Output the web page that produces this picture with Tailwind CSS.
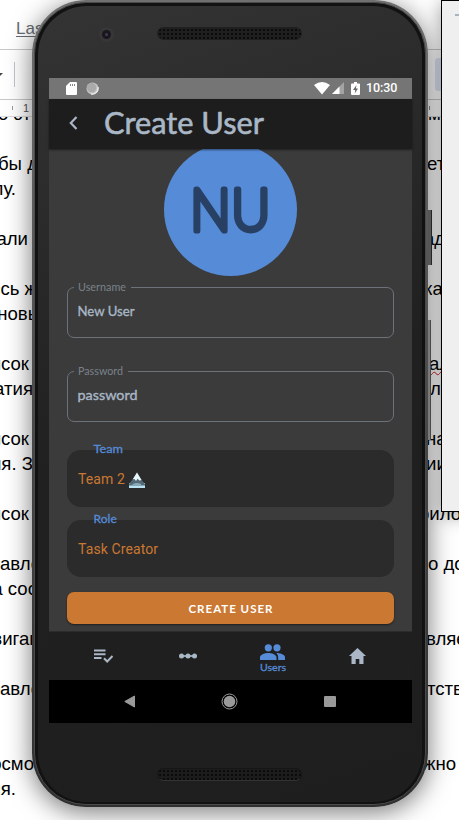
<!DOCTYPE html>
<html lang="en">
<head>
<meta charset="utf-8">
<title>Create User</title>
<script src="https://cdn.jsdelivr.net/npm/@tailwindcss/browser@4"></script>
</head>
<body class="overflow-hidden bg-white">
<div class="relative w-[459px] h-[820px] overflow-hidden bg-white font-['Liberation_Sans',sans-serif] text-black">

  <!-- document editor -->
  <div class="flex flex-col h-full">
    <div class="h-[50px] border-b border-[#c8c8c8] pl-[16px] pt-[19px] text-[17px] leading-[20px] text-[#666b72] underline underline-offset-2">Las</div>
    <div class="h-[50px] border-b border-[#c8c8c8] flex items-center justify-between">
      <div class="flex items-center gap-[11px]"><span class="border-x-[3px] border-x-transparent border-t-[3px] border-t-[#444] -ml-[3px]"></span><span class="w-px h-[25px] bg-[#c3c5cc]"></span></div>
      <div class="w-[24px] h-[33px] rounded-[3px] bg-[#dfe5f8]"></div>
    </div>
    <div class="h-[17px] border-b border-[#ddd] flex items-center text-[11px] leading-[12px] text-[#555]"><span class="w-px h-[4px] bg-[#999] ml-[12px]"></span><span class="ml-[10px]">1</span><span class="w-px h-[4px] bg-[#888] ml-[400px]"></span></div>
    <div class="h-[34px] overflow-hidden flex justify-between text-[18.6px] leading-[25px]">
      <span class="-mt-[16px] -ml-[2px] h-[21px] [clip-path:inset(16px_0_0_0)]">о эт</span><span class="-mt-[16px] w-[31px] [clip-path:inset(16px_0_0_0)]">ми</span>
    </div>
    <div class="flex justify-between text-[18.6px] leading-[25px] whitespace-nowrap">
      <div class="w-[45px] flex flex-col items-end">
        <div class="h-[25px] pr-[7px]">бы д</div>
        <div class="h-[50px] pr-[29px]">лу.</div>
        <div class="h-[50px] pr-[17px]">али</div>
        <div class="h-[25px] pr-[8px]">сь ж</div>
        <div class="h-[50px] pr-[4px]">новы</div>
        <div class="h-[25px] pr-[16px]">исок</div>
        <div class="h-[50px] pr-[12px]">атия</div>
        <div class="h-[25px] pr-[16px]">исок</div>
        <div class="h-[50px] pr-[12px]">ия. З</div>
        <div class="h-[50px] pr-[16px]">исок</div>
        <div class="h-[25px] pr-[4px]">бавле</div>
        <div class="h-[50px] pr-[7px]">а соо</div>
        <div class="h-[50px] pr-[5px]">вигац</div>
        <div class="h-[75px] pr-[4px]">бавле</div>
        <div class="h-[25px] pr-[11px]">осмо</div>
        <div class="h-[25px] pr-[29px]">ия.</div>
      </div>
      <div class="w-[39px] flex flex-col">
        <div class="h-[75px] pl-[7px]">ет</div>
        <div class="h-[50px] pl-[4px]">ад</div>
        <div class="h-[75px] pl-[4px]">ка</div>
        <div class="h-[25px] pl-[9px] underline decoration-wavy decoration-[#d02020] decoration-1">ал</div>
        <div class="h-[50px] pl-[10px]">л</div>
        <div class="h-[25px] pl-[6px]">на</div>
        <div class="h-[50px] pl-[6px]">ии</div>
        <div class="h-[50px] -ml-[1px]">рило</div>
        <div class="h-[75px] pl-[8px]">о до</div>
        <div class="h-[50px] pl-[6px]">вляе</div>
        <div class="h-[75px] pl-[7px]">тств</div>
        <div class="h-[25px] pl-[3px]">жно в</div>
      </div>
    </div>
  </div>

  <!-- side window over the document -->
  <div class="absolute z-10 left-[441px] top-0 w-[30px] h-[512px] border border-black bg-[#efefef] shadow-[0_3px_18px_1px_rgba(0,0,0,0.35)] pl-[13px] pt-[13px]"><div class="h-[2px] w-3 bg-[#a9b4bd]"></div></div>

  <!-- phone side keys -->
  <div class="absolute left-[426px] top-[210px] w-[6px] h-[55px] bg-[#777] border-r border-[#333]"></div>
  <div class="absolute left-[426px] top-[320px] w-[5px] h-[120px] bg-[#aaa] border-r border-[#666]"></div>

  <!-- phone -->
  <div class="absolute left-[32px] top-0 w-[396px] h-[807px] rounded-[54px] bg-linear-to-b from-[#707070] via-[#444] via-60% to-[#303030] shadow-[0_5px_24px_1px_rgba(0,0,0,0.5)] p-[2px]">
    <div class="h-full rounded-[52px] bg-[#121212] pt-[3px] pb-[2px] px-[3px] border border-[#4b4b4b]">
      <div class="relative h-full rounded-[49px] bg-linear-160 from-[#343435] via-[#202020] via-50% to-[#1e1e1f] pl-[11px] pr-[10px] flex flex-col">
        <div class="h-[72px] pt-[21px] flex items-start">
          <div class="size-[15px] rounded-full bg-[#373738] ml-[50px] flex items-center justify-center"><div class="size-[9px] rounded-full bg-[#19171e] flex items-center justify-center"><div class="size-[3px] rounded-full bg-[#453a4c]"></div></div></div>
          <div class="w-[145px] h-[13px] rounded-full ml-[43px] bg-[#151515] bg-[radial-gradient(circle,#0b0b0b_0.8px,#1f1f1f_1.3px)] bg-size-[4px_4px] border border-[#202020]"></div>
        </div>

        <div class="w-[363px] h-[645px] shrink-0 flex flex-col bg-[#3b3b3b]">
          <!-- status bar -->
          <div class="h-[20.5px] shrink-0 bg-[#757575] flex items-center">
            <svg class="w-[11px] h-[13px] ml-[17px]" viewBox="0 0 11 13"><path d="M4 0h6q1 0 1 1v11q0 1-1 1H1q-1 0-1-1V4z" fill="#fff"/><path d="M4.5 2v2M6.5 2v2M8.5 2v2" stroke="#888"/></svg>
            <svg class="size-[13px] ml-[9px]" viewBox="0 0 13 13"><circle cx="6.5" cy="6.5" r="6" fill="#c4c4c4"/><circle cx="5.7" cy="5.7" r="4.7" fill="#aaa"/><path d="M12 5a6 6 0 0 1-7 7" stroke="#eee" stroke-width="1.3" fill="none"/></svg>
            <svg class="w-[16px] h-[13px] ml-[215px]" viewBox="0 0 16 13"><path d="M0 3Q8-3 16 3L8 12.6z" fill="#fff"/></svg>
            <svg class="size-[12px] ml-[2px]" viewBox="0 0 12 12"><path d="M12 0v12H0z" fill="#a3a3a3"/><path d="M7.5 4.5V12H0z" fill="#fff"/></svg>
            <svg class="w-[9px] h-[13px] ml-[7px]" viewBox="0 0 9 13"><path d="M3 0h3v1.500h2q1 0 1 1V12q0 1-1 1H1q-1 0-1-1V2.500q0-1 1-1h2z" fill="#fff"/><path d="M5.500 3L2 8h2.300L3.700 11.500 7 6.500H4.900z" fill="#666"/></svg>
            <span class="ml-[6px] pt-px font-['Roboto',sans-serif] font-medium text-[12.500px] text-white tracking-[-0.1px]">10:30</span>
          </div>
          <!-- header -->
          <div class="h-[50.5px] shrink-0 bg-[#1d1d1d] flex items-center shadow-[0_1px_2px_rgba(0,0,0,.5)] relative z-10">
            <svg class="w-[9px] h-[14px] ml-[20px] -mt-[2px]" viewBox="0 0 9 14"><path d="M7.500 1L1.800 7 7.500 13" fill="none" stroke="#a9b7c6" stroke-width="2.200"/></svg>
            <svg class="w-[180px] h-[50px] ml-[23px]" viewBox="0 0 180 50"><text x="3" y="35" font-family="Lato,sans-serif" font-size="30.500" textLength="160" lengthAdjust="spacingAndGlyphs" fill="#a9b7c6" stroke="#a9b7c6" stroke-width=".6" stroke-linejoin="round">Create User</text></svg>
          </div>
          <!-- form -->
          <div class="h-[482px] shrink-0 overflow-hidden px-[18px]">
            <div class="w-[132.500px] h-[133px] -mt-[6.500px] ml-[97px] rounded-full bg-[#568bd8]">
              <svg class="size-[133px]" viewBox="0 0 133 133"><text x="26" y="87.500" font-family="Lato,sans-serif" font-size="60" font-weight="300" textLength="80.500" lengthAdjust="spacingAndGlyphs" fill="#274064" stroke="#274064" stroke-width="5" stroke-linejoin="round">NU</text></svg>
            </div>
            <div class="relative mt-[11px] w-[327px] h-[51px] rounded-[7px] border border-[#6c7279]">
              <svg class="absolute left-[6px] -top-[8px] w-[57px] h-[15px] bg-[#3b3b3b]" viewBox="0 0 57 15"><text x="4" y="11" font-family="Lato,sans-serif" font-size="10.500" textLength="48" lengthAdjust="spacingAndGlyphs" fill="#7a828b">Username</text></svg>
              <svg class="w-[200px] h-[49px]" viewBox="0 0 200 49"><text x="9.500" y="28" font-family="Lato,sans-serif" font-size="14" textLength="57" lengthAdjust="spacingAndGlyphs" fill="#a9b7c6" stroke="#a9b7c6" stroke-width=".35">New User</text></svg>
            </div>
            <div class="relative mt-[33.500px] w-[327px] h-[51px] rounded-[7px] border border-[#6c7279]">
              <svg class="absolute left-[6px] -top-[8px] w-[54px] h-[15px] bg-[#3b3b3b]" viewBox="0 0 54 15"><text x="4" y="11" font-family="Lato,sans-serif" font-size="10.500" textLength="45" lengthAdjust="spacingAndGlyphs" fill="#7a828b">Password</text></svg>
              <svg class="w-[200px] h-[49px]" viewBox="0 0 200 49"><text x="9.500" y="28" font-family="Lato,sans-serif" font-size="14" textLength="60" lengthAdjust="spacingAndGlyphs" fill="#a9b7c6" stroke="#a9b7c6" stroke-width=".35">password</text></svg>
            </div>
            <div class="relative mt-[27.500px] w-[326.500px] h-[57px] rounded-[14px] bg-[#2b2b2b] flex items-center pl-[11px] pt-[3px] gap-[4px] font-['Roboto',sans-serif] text-[14px] text-[#cb7832]">
              <svg class="absolute left-[26px] -top-[9px] w-[34px] h-[15px]" viewBox="0 0 34 15"><text x=".5" y="11.500" font-family="Lato,sans-serif" font-size="12" textLength="29.500" lengthAdjust="spacingAndGlyphs" fill="#568bd8" stroke="#568bd8" stroke-width=".3">Team</text></svg>
              <span class="w-[47px] tracking-[0.1px]">Team 2</span>
              <svg class="w-[16px] h-[16px]" viewBox="0 0 16 16" role="img" aria-label="🏔️"><path d="M0 11h16v5H0z" fill="#b9e3f2"/><path d="M0 12L3.500 7.500 8 .5l5 8 3 3.500v1.500H0z" fill="#536b78"/><path d="M8 .5L3.800 7.300 5.500 7 7 9l1.500-2.200L10.500 8.500 12.500 8z" fill="#e8f7fb"/><path d="M4 12q4-2 8 0v1.500H3z" fill="#8caab7"/></svg>
            </div>
            <div class="relative mt-[13px] w-[326.500px] h-[57px] rounded-[14px] bg-[#2b2b2b] flex items-center pl-[11px] pt-[3px] font-['Roboto',sans-serif] text-[14px] tracking-[0.1px] text-[#cb7832]">
              <svg class="absolute left-[26px] -top-[9px] w-[34px] h-[15px]" viewBox="0 0 34 15"><text x=".5" y="11.500" font-family="Lato,sans-serif" font-size="12" textLength="23.500" lengthAdjust="spacingAndGlyphs" fill="#568bd8" stroke="#568bd8" stroke-width=".3">Role</text></svg>
              <span>Task Creator</span>
            </div>
            <div class="mt-[15px] w-[326.500px] h-[32px] rounded-[7px] bg-[#cb7832] shadow-[0_1px_2px_rgba(0,0,0,.5)]">
              <svg class="w-[327px] h-[32px]" viewBox="0 0 327 32"><text x="121.500" y="20.500" font-family="Lato,sans-serif" font-weight="700" font-size="11.500" textLength="84" fill="#fff">CREATE USER</text></svg>
            </div>
          </div>
          <!-- tab bar -->
          <div class="h-[49px] shrink-0 bg-[#1f1f1f] border-t border-[#2c2c2c] flex items-center">
            <svg class="w-[20px] h-[14px] ml-[45px]" viewBox="0 0 20 14"><path d="M0 1.500h11.500M0 5.200h11.500M0 9h7.500M10 9.200l3.200 3.300L18.500 7" fill="none" stroke="#a9b7c6" stroke-width="2"/></svg>
            <svg class="w-[18px] h-[6px] ml-[65px]" viewBox="0 0 18 6"><path d="M2 3h14" stroke="#a9b7c6" stroke-width="1.700"/><g fill="#a9b7c6"><circle cx="2.500" cy="3" r="2.500"/><circle cx="9" cy="3" r="2.500"/><circle cx="15.500" cy="3" r="2.500"/></g></svg>
            <div class="ml-[61.500px] w-[28px] flex flex-col items-center pt-[5px]">
              <svg class="w-[25px] h-[17px]" viewBox="0 0 25 17" fill="#568bd8"><circle cx="8.300" cy="3.800" r="3.600"/><circle cx="17" cy="3.800" r="3.600"/><path d="M0 16v-2.700C0 10.500 5.500 9 8.300 9s8.200 1.500 8.200 4.300V16zM16.300 9.100C19.500 9.100 25 10.500 25 13.300V16h-6.800v-2.700c0-1.700-.7-3.100-1.900-4.200z"/></svg>
              <svg class="w-[28px] h-[13px]" viewBox="0 0 28 13"><text x="1" y="10" font-family="Lato,sans-serif" font-size="10" textLength="26" lengthAdjust="spacingAndGlyphs" fill="#568bd8" stroke="#568bd8" stroke-width=".3">Users</text></svg>
            </div>
            <svg class="w-[17px] h-[16px] ml-[62px]" viewBox="0 0 17 16"><path d="M8.500 0L0 8h2.500v8h4.200v-5h3.600v5h4.200V8H17z" fill="#a9b7c6"/></svg>
          </div>
          <!-- system navigation -->
          <div class="h-[43px] shrink-0 bg-black flex items-center">
            <svg class="w-[11px] h-[13px] ml-[75px]" viewBox="0 0 11 13"><path d="M10.500 1v11L.8 6.500z" fill="#999" stroke="#999" stroke-linejoin="round"/></svg>
            <svg class="size-[17px] ml-[86px]" viewBox="0 0 17 17"><circle cx="8.500" cy="8.500" r="7.500" fill="none" stroke="#999"/><circle cx="8.500" cy="8.500" r="5.800" fill="#999"/></svg>
            <div class="size-[11.500px] rounded-[1px] bg-[#999] ml-[86px]"></div>
          </div>
        </div>
        <div class="mt-[45px] ml-[108px] shrink-0 w-[145px] h-[13px] rounded-full bg-[radial-gradient(circle,#0b0b0b_0.8px,#1c1c1c_1.3px)] bg-size-[4px_4px] border border-[#161616] border-b-[#333]"></div>
      </div>
    </div>
  </div>
</div>
</body>
</html>
